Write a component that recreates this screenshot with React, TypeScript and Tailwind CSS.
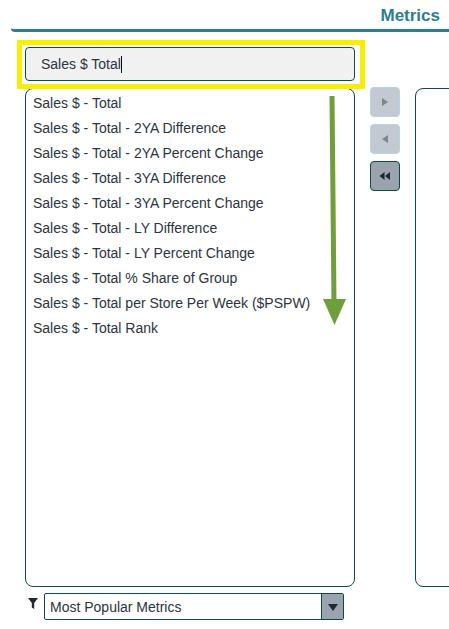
const metrics = [
  'Sales $ - Total',
  'Sales $ - Total - 2YA Difference',
  'Sales $ - Total - 2YA Percent Change',
  'Sales $ - Total - 3YA Difference',
  'Sales $ - Total - 3YA Percent Change',
  'Sales $ - Total - LY Difference',
  'Sales $ - Total - LY Percent Change',
  'Sales $ - Total % Share of Group',
  'Sales $ - Total per Store Per Week ($PSPW)',
  'Sales $ - Total Rank',
];

function Triangle({ dir, className }: { dir: 'right' | 'left' | 'down'; className?: string }) {
  const points = dir === 'right' ? '2,1 8,5 2,9' : dir === 'left' ? '8,1 2,5 8,9' : '0,2 10,2 5,9';
  return (
    <svg viewBox="0 0 10 10" className={className}>
      <polygon points={points} fill="currentColor" />
    </svg>
  );
}

export default function App() {
  return (
    <div className="relative h-[629px] w-[449px] overflow-hidden bg-white font-['Liberation_Sans',Arial,sans-serif] text-[14px] text-[#2b3440]">
      <div className="ml-[11px] flex h-[32px] items-center justify-end rounded-l-sm border-b-[3px] border-[#2b7f8e] pr-[9px] pt-px">
        <h1 className="text-[17px] font-bold leading-none text-[#2b7f8e]">Metrics</h1>
      </div>

      <div className="px-[25px]">
        <div className="relative mt-[15px] flex h-[34px] w-[330px] items-center rounded-[4px] border border-[#0f4a4a] bg-[#f1f1f1] pl-[15px]">
          <span>Sales $ Total</span>
          <span className="h-[17px] w-px bg-[#111]" />
          {/* yellow callout from the screenshot */}
          <div className="pointer-events-none absolute -top-[8px] -right-[11px] -bottom-[9px] -left-[9px] border-[5px] border-[#f7ee00]" />
        </div>

        <div className="mt-[7px] flex">
          <ul className="h-[499px] w-[330px] shrink-0 rounded-[8px] border border-[#0f4a4a] pl-[7px] pt-[2px]">
            {metrics.map((m) => (
              <li key={m} className="flex h-[25px] items-center whitespace-nowrap">
                {m}
              </li>
            ))}
          </ul>

          <div className="ml-[15px] -mt-px flex w-[30px] shrink-0 flex-col gap-[7px]">
            <button className="flex h-[30px] w-[30px] items-center justify-center rounded-[4px] border border-[#b9d2e4] bg-[#c3c9d1] text-[#7d8590]">
              <Triangle dir="right" className="h-[10px] w-[10px]" />
            </button>
            <button className="flex h-[30px] w-[30px] items-center justify-center rounded-[4px] border border-[#b9d2e4] bg-[#c3c9d1] text-[#7d8590]">
              <Triangle dir="left" className="h-[10px] w-[10px]" />
            </button>
            <button className="flex h-[30px] w-[30px] items-center justify-center rounded-[4px] border border-[#0f4a4a] bg-[#9aa3ae] text-[#1f2933]">
              <svg viewBox="0 0 12 8" className="h-[8px] w-[12px]">
                <polygon points="5.5,0 5.5,8 0.5,4" fill="currentColor" />
                <polygon points="11,0 11,8 6,4" fill="currentColor" />
              </svg>
            </button>
          </div>

          <div className="ml-[15px] h-[499px] w-[60px] shrink-0 rounded-[8px] border border-[#0f4a4a]" />
        </div>

        <div className="mt-[6px] flex items-start">
          <svg viewBox="0 0 10 11" className="mt-[5px] ml-[3px] h-[11px] w-[10px] text-[#1f2933]">
            <polygon points="0,0 10,0 6.2,5 6.2,11 3.8,9.5 3.8,5" fill="currentColor" />
          </svg>
          <div className="ml-[6px] flex h-[27px] w-[300px] items-stretch overflow-hidden rounded-[2px] border border-[#0f4a4a]">
            <span className="flex flex-1 items-center pl-[5px] pt-px">Most Popular Metrics</span>
            <span className="flex w-[22px] items-center justify-center border-l border-[#0f4a4a] bg-[#9aa3ae] text-[#1f2933]">
              <Triangle dir="down" className="h-[10px] w-[10px]" />
            </span>
          </div>
        </div>
      </div>

      {/* green callout arrow */}
      <svg viewBox="0 0 449 629" className="pointer-events-none absolute top-0 left-0 h-[629px] w-[449px]">
        <line x1="332" y1="96" x2="334" y2="302" stroke="#6f9f3b" strokeWidth="5" />
        <polygon points="323,299 346,299 334.5,325" fill="#6f9f3b" />
      </svg>
    </div>
  );
}
